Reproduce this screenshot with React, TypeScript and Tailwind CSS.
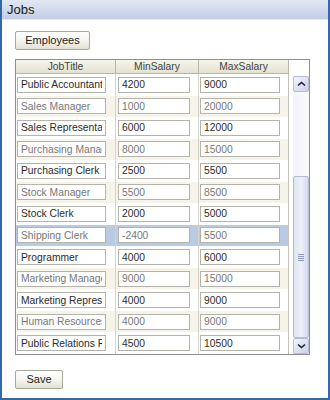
import React from 'react';

const jobs: [string, string, string][] = [
  ['Public Accountant', '4200', '9000'],
  ['Sales Manager', '1000', '20000'],
  ['Sales Representative', '6000', '12000'],
  ['Purchasing Manager', '8000', '15000'],
  ['Purchasing Clerk', '2500', '5500'],
  ['Stock Manager', '5500', '8500'],
  ['Stock Clerk', '2000', '5000'],
  ['Shipping Clerk', '-2400', '5500'],
  ['Programmer', '4000', '6000'],
  ['Marketing Manager', '9000', '15000'],
  ['Marketing Representative', '4000', '9000'],
  ['Human Resources', '4000', '9000'],
  ['Public Relations Representative', '4500', '10500'],
];

const SELECTED = 7;

function Cell({ value, width, dim }: { value: string; width: string; dim: boolean }) {
  return (
    <input
      readOnly
      value={value}
      className={`${width} h-[16px] border border-[#b4b4ac] bg-white px-[3px] text-[10.3px] outline-none ${
        dim ? 'text-[#777]' : 'text-[#2b2b2b]'
      }`}
    />
  );
}

function XpButton({ label, width }: { label: string; width: string }) {
  return (
    <button
      className={`${width} h-[19px] rounded-[2px] border border-[#a8a898] bg-gradient-to-b from-white via-[#f6f5ef] to-[#e3e1d3] text-[11px] text-[#222]`}
    >
      {label}
    </button>
  );
}

function Chevron({ down }: { down?: boolean }) {
  return (
    <svg width="9" height="6" viewBox="0 0 9 6">
      <path
        d={down ? 'M1 1.5 L4.5 4.5 L8 1.5' : 'M1 4.5 L4.5 1.5 L8 4.5'}
        fill="none"
        stroke="#1b1b3a"
        strokeWidth="1.6"
      />
    </svg>
  );
}

function ScrollButton({ down }: { down?: boolean }) {
  return (
    <div className="flex h-[16px] w-[16px] items-center justify-center rounded-[2px] border border-[#b7bdd3] bg-gradient-to-br from-[#f4f6fc] to-[#c9d0e6]">
      <Chevron down={down} />
    </div>
  );
}

export default function App() {
  return (
    <div
      className="h-[400px] w-[330px] bg-white"
      style={{ fontFamily: '"Liberation Sans", Arial, sans-serif' }}
    >
      <div className="flex h-[400px] flex-col border-x-2 border-b-2 border-[#3468a8]">
        <div className="flex h-[20px] items-center border-b border-[#e6ebf5] bg-gradient-to-b from-[#e2e8f4] to-[#c2cee6] pl-[5px] text-[13px] text-[#1a1a1a]">
          Jobs
        </div>

        <div className="flex flex-1 flex-col pl-[13px] pt-[11px]">
          <XpButton label="Employees" width="w-[75px]" />

          <div className="mt-[9px] flex h-[296px] w-[295px] border border-[#8f8f8f] text-[10.3px]">
            <div className="flex flex-col">
              <div className="flex h-[14px] border-b border-[#b8b6a4] bg-gradient-to-b from-[#f6f5ec] to-[#e4e2d0] text-[#444]">
                <div className="flex w-[100px] items-center justify-center border-r border-[#b8b6a4]">JobTitle</div>
                <div className="flex w-[83px] items-center justify-center border-r border-[#b8b6a4]">MinSalary</div>
                <div className="flex w-[90px] items-center justify-center border-r border-[#b8b6a4]">MaxSalary</div>
              </div>
              <div className="flex flex-1 flex-col">
                {jobs.map((job, i) => {
                  const dim = i % 2 === 1;
                  const bg = i === SELECTED ? 'bg-[#b9cbe2]' : dim ? 'bg-[#f6f4e9]' : 'bg-white';
                  return (
                    <div key={job[0]} className={`flex flex-1 items-center ${bg}`}>
                      <div className="flex h-full w-[100px] items-center border-r border-[#d6d4ca] pl-[1px]">
                        <Cell value={job[0]} width="w-[89px]" dim={dim} />
                      </div>
                      <div className="flex h-full w-[83px] items-center border-r border-[#d6d4ca] pl-[2px]">
                        <Cell value={job[1]} width="w-[72px]" dim={dim} />
                      </div>
                      <div className="flex h-full w-[90px] items-center border-r border-[#c4c2b8] pl-[1px]">
                        <Cell value={job[2]} width="w-[80px]" dim={dim} />
                      </div>
                    </div>
                  );
                })}
              </div>
            </div>

            <div className="flex flex-1 flex-col items-end">
              <div className="h-[16px]" />
              <div className="flex flex-1 flex-col bg-gradient-to-r from-[#f2f3f8] to-[#fbfbfd]">
                <ScrollButton />
                <div className="h-[84px]" />
                <div className="flex w-[16px] flex-1 items-center justify-center rounded-[2px] border border-[#b7bdd3] bg-gradient-to-r from-[#dfe3f2] via-[#eef0f9] to-[#d4d9ec]">
                  <div className="flex flex-col gap-[1px]">
                    <div className="h-[1px] w-[6px] bg-[#8e96b6]" />
                    <div className="h-[1px] w-[6px] bg-[#8e96b6]" />
                    <div className="h-[1px] w-[6px] bg-[#8e96b6]" />
                    <div className="h-[1px] w-[6px] bg-[#8e96b6]" />
                  </div>
                </div>
                <ScrollButton down />
              </div>
            </div>
          </div>

          <div className="mt-[11px]">
            <XpButton label="Save" width="w-[48px]" />
          </div>
        </div>
      </div>
    </div>
  );
}
